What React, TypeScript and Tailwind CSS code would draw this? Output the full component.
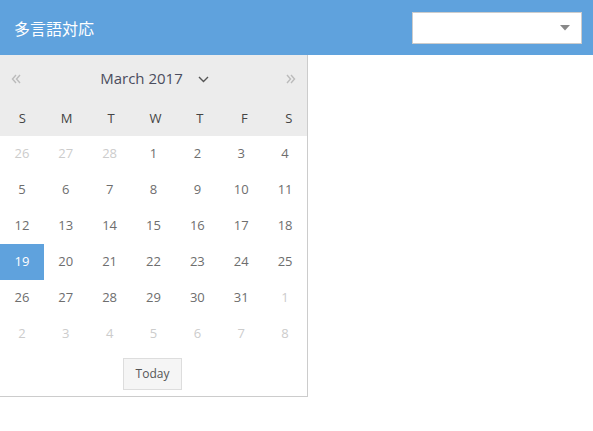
import React from "react";

const weeks: { d: number; muted?: boolean; sel?: boolean }[][] = [
  [{ d: 26, muted: true }, { d: 27, muted: true }, { d: 28, muted: true }, { d: 1 }, { d: 2 }, { d: 3 }, { d: 4 }],
  [{ d: 5 }, { d: 6 }, { d: 7 }, { d: 8 }, { d: 9 }, { d: 10 }, { d: 11 }],
  [{ d: 12 }, { d: 13 }, { d: 14 }, { d: 15 }, { d: 16 }, { d: 17 }, { d: 18 }],
  [{ d: 19, sel: true }, { d: 20 }, { d: 21 }, { d: 22 }, { d: 23 }, { d: 24 }, { d: 25 }],
  [{ d: 26 }, { d: 27 }, { d: 28 }, { d: 29 }, { d: 30 }, { d: 31 }, { d: 1, muted: true }],
  [{ d: 2, muted: true }, { d: 3, muted: true }, { d: 4, muted: true }, { d: 5, muted: true }, { d: 6, muted: true }, { d: 7, muted: true }, { d: 8, muted: true }],
];

const days = ["S", "M", "T", "W", "T", "F", "S"];

export default function App() {
  return (
    <div
      className="w-[593px] h-[431px] bg-white"
      style={{ fontFamily: '"Open Sans", "Noto Sans CJK JP", sans-serif' }}
    >
      <div className="h-[55px] bg-[#5fa2dd] flex items-center justify-between pl-[14px] pr-[11px]">
        <div className="text-white text-[16px] leading-none" style={{ fontFamily: '"Noto Sans CJK JP", sans-serif' }}>
          多言語対応
        </div>
        <div className="w-[170px] h-[32px] bg-white border border-[#cccccc] flex items-center justify-end pr-[11px]">
          <svg width="10" height="6" viewBox="0 0 10 6">
            <polygon points="0,0 10,0 5,5.5" fill="#888888" />
          </svg>
        </div>
      </div>
      <div className="w-[308px] border-r border-b border-[#cccccc]">
        <div className="bg-[#ececec] overflow-hidden">
          <div className="h-[46px] flex items-center justify-between px-[10px]">
            <svg width="12" height="12" viewBox="0 0 12 12" className="mt-[1px]">
              <path d="M6 2 L2.5 6 L6 10 M10 2 L6.5 6 L10 10" stroke="#bbbbbb" strokeWidth="1.4" fill="none" />
            </svg>
            <div className="flex items-center gap-[15px] ml-[2px]">
              <span className="text-[15px] text-[#4b4d5e]">March 2017</span>
              <svg width="11" height="7" viewBox="0 0 11 7" className="mt-[2px]">
                <path d="M1 1 L5.5 5.5 L10 1" stroke="#555" strokeWidth="1.4" fill="none" />
              </svg>
            </div>
            <svg width="12" height="12" viewBox="0 0 12 12" className="mt-[1px]">
              <path d="M2 2 L5.5 6 L2 10 M6 2 L9.5 6 L6 10" stroke="#bbbbbb" strokeWidth="1.4" fill="none" />
            </svg>
          </div>
          <div className="h-[35px] w-[311px] grid grid-cols-7 items-center text-[13px] text-[#444444]">
            {days.map((d, i) => (
              <div key={i} className="text-center">{d}</div>
            ))}
          </div>
        </div>
        <div className="grid grid-cols-7">
          {weeks.flat().map((c, i) => (
            <div
              key={i}
              className={
                "h-[36px] flex items-center justify-center text-[13px] " +
                (c.sel
                  ? "bg-[#5fa2dd] text-white"
                  : c.muted
                  ? "text-[#cccccc]"
                  : "text-[#6e6e6e]")
              }
            >
              {c.d}
            </div>
          ))}
        </div>
        <div className="flex justify-center pt-[6px] pb-[6px]">
          <div className="w-[59px] h-[32px] bg-[#f5f5f5] border border-[#dddddd] flex items-center justify-center text-[12px] text-[#555555] mr-[2px]">
            Today
          </div>
        </div>
      </div>
    </div>
  );
}
